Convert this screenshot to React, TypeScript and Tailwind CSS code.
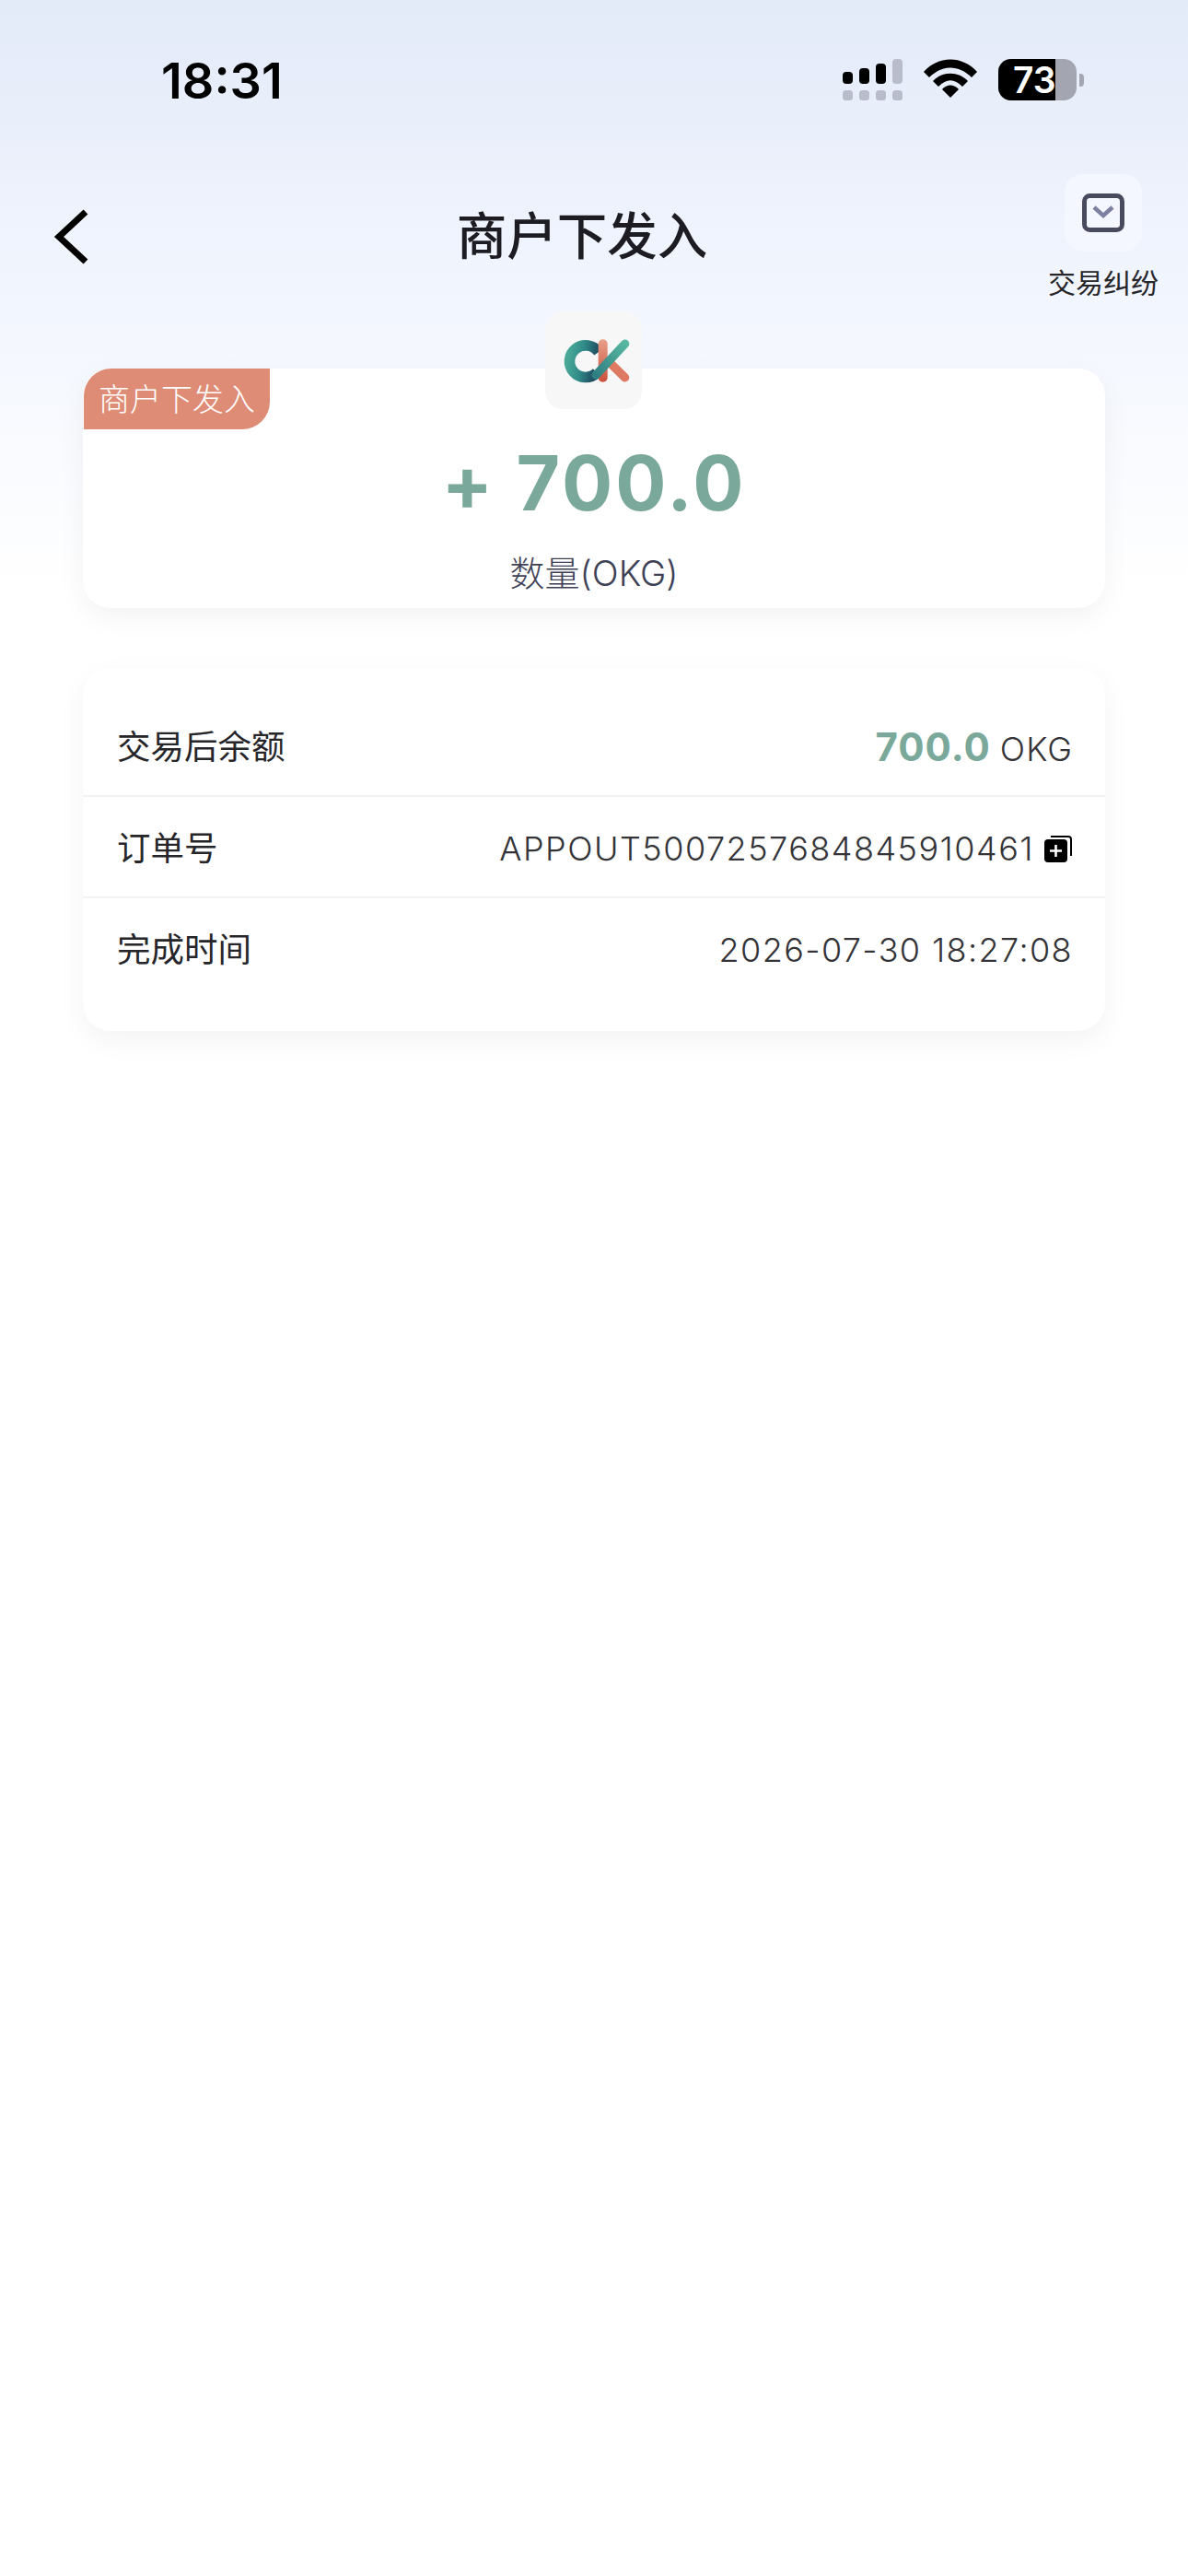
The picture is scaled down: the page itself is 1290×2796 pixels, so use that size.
import React from "react";

const cjk = "font-['Inter','Noto_Sans_CJK_SC',sans-serif]";

function Signal() {
  return (
    <svg width="65" height="45" viewBox="0 0 65 45">
      <rect x="0" y="14" width="11" height="13" rx="4" fill="#000" />
      <rect x="18" y="10" width="11" height="17" rx="4" fill="#000" />
      <rect x="36" y="5" width="11" height="22" rx="4" fill="#000" />
      <rect x="54" y="0" width="11" height="27" rx="4" fill="#b9bdcb" />
      <rect x="0" y="34" width="11" height="11" rx="3.5" fill="#b9bdcb" />
      <rect x="18" y="34" width="11" height="11" rx="3.5" fill="#b9bdcb" />
      <rect x="36" y="34" width="11" height="11" rx="3.5" fill="#b9bdcb" />
      <rect x="54" y="34" width="11" height="11" rx="3.5" fill="#b9bdcb" />
    </svg>
  );
}

function Wifi() {
  return (
    <svg width="58" height="42" viewBox="0 0 58 42">
      <path d="M0 14 C16 -4 42 -4 58 14 L52 20 C38 6 20 6 6 20 Z" fill="#000" />
      <path d="M10 24 C20 13 38 13 48 24 L42 30 C33 21 25 21 16 30 Z" fill="#000" />
      <path d="M20 33 C25 27 33 27 38 33 L29 42 Z" fill="#000" />
    </svg>
  );
}

function Battery() {
  return (
    <div className="flex items-center">
      <div className="relative flex h-[45px] w-[85px] overflow-hidden rounded-[14px] bg-[#a3a6b0]">
        <div className="h-full w-[62px] bg-black" />
        <span className="absolute left-[16px] top-0 text-[39px] font-semibold leading-[45px] text-white font-['Inter',sans-serif]">
          73
        </span>
      </div>
      <div className="ml-[3px] h-[14px] w-[5px] rounded-r-[4px] bg-[#a3a6b0]" />
    </div>
  );
}

function Logo() {
  return (
    <svg width="105" height="106" viewBox="97 55 315 317">
      <defs>
        <linearGradient id="ring" x1="0" y1="0" x2="1" y2="0.2">
          <stop offset="0" stopColor="#4aa898" />
          <stop offset="0.5" stopColor="#2f8a88" />
          <stop offset="1" stopColor="#1f4a60" />
        </linearGradient>
        <linearGradient id="red" x1="0" y1="0" x2="0" y2="1">
          <stop offset="0" stopColor="#e9a08a" />
          <stop offset="1" stopColor="#c9503c" />
        </linearGradient>
        <linearGradient id="diag" x1="1" y1="0" x2="0" y2="1">
          <stop offset="0" stopColor="#57b7a0" />
          <stop offset="1" stopColor="#2f7f82" />
        </linearGradient>
      </defs>
      <path d="M271 187 A52 52 0 1 0 265 254" fill="none" stroke="url(#ring)" strokeWidth="35" />
      <rect x="270" y="145" width="30" height="140" rx="15" fill="url(#red)" />
      <line x1="312" y1="226" x2="357" y2="270" stroke="#df7a62" strokeWidth="28" strokeLinecap="round" />
      <line x1="262" y1="262" x2="357" y2="160" stroke="url(#diag)" strokeWidth="28" strokeLinecap="round" />
    </svg>
  );
}

function Row({ label, children, className }: { label: string; children: React.ReactNode; className: string }) {
  return (
    <div className={`flex h-[110px] items-center justify-between pl-[37px] pr-[35px] ${className}`}>
      <span className="pt-[2px] text-[36.5px] font-normal text-[#26262a]">{label}</span>
      {children}
    </div>
  );
}

export default function App() {
  return (
    <div className={`min-h-[2796px] w-[1290px] bg-[linear-gradient(180deg,#e3eaf8_0px,#f1f5fe_300px,#f5f8fe_400px,#ffffff_640px)] ${cjk}`}>
      <div className="flex h-[189px] items-start justify-between pl-[175px] pr-[113px] pt-[64px]">
        <span className="text-[54px] font-semibold leading-[47px] text-black">18:31</span>
        <div className="flex items-start gap-[23px]">
          <Signal />
          <Wifi />
          <Battery />
        </div>
      </div>

      <div className="relative flex h-[136px] items-center justify-center pr-[26px]">
        <svg className="absolute left-[57px] top-[36px]" width="42" height="64" viewBox="0 0 42 64">
          <path d="M36 5 L7 32 L36 59" fill="none" stroke="#000" strokeWidth="7" />
        </svg>
        <span className="text-[54.5px] font-medium text-[#1c1c22]">商户下发入</span>
        <div className="absolute left-[1138px] top-0 flex w-[120px] flex-col items-center">
          <div className="flex h-[84px] w-[84px] items-center justify-center rounded-[20px] bg-[#f4f7ff]">
            <svg width="46" height="42" viewBox="0 0 46 42">
              <rect x="2.5" y="2.5" width="41" height="37" rx="6" fill="none" stroke="#484b5e" strokeWidth="5" />
              <path d="M13 15 L23 24 L33 15" fill="none" stroke="#7d80a0" strokeWidth="4.5" />
            </svg>
          </div>
          <span className="mt-[14px] whitespace-nowrap text-[30px] font-normal leading-[40px] text-[#26262a]">交易纠纷</span>
        </div>
      </div>

      <div className="relative ml-[90px] mt-[75px] h-[260px] w-[1110px] rounded-[30px] bg-white shadow-[0_10px_30px_rgba(0,0,0,0.05)]">
        <div className="absolute left-[1px] top-0 flex h-[66px] w-[202px] items-center justify-center rounded-bl-none rounded-br-[30px] rounded-tl-[30px] rounded-tr-none bg-[#de8c75] text-[34px] font-light text-white">
          商户下发入
        </div>
        <div className="absolute left-[502px] top-[-62px] flex h-[106px] w-[105px] items-center justify-center rounded-[20px] bg-[#f7f7f7]">
          <Logo />
        </div>
        <div className="flex flex-col items-center pt-[75px]">
          <div className="text-[82px] font-bold leading-[100px] tracking-[3px] text-[#7aa99b]">+ 700.0</div>
          <div className="mt-[22px] text-[38px] font-light leading-[50px] text-[#3e4156]">数量(OKG)</div>
        </div>
      </div>

      <div className="ml-[90px] mt-[65px] h-[394px] w-[1110px] rounded-[30px] bg-white pt-[30px] shadow-[0_10px_30px_rgba(0,0,0,0.05)]">
        <Row label="交易后余额" className="border-b-2 border-[#f2f2f3] pt-[3px]">
          <span className="flex items-baseline">
            <span className="text-[42px] font-bold tracking-[1px] text-[#7aa99b]">700.0</span>
            <span className="ml-[10px] text-[36px] font-light tracking-[1px] text-[#333338]">OKG</span>
          </span>
        </Row>
        <Row label="订单号" className="border-b-2 border-[#f2f2f3] pt-[3px]">
          <span className="flex items-center">
            <span className="text-[36px] font-light tracking-[1.5px] text-[#333338]">APPOUT5007257684845910461</span>
            <svg className="ml-[11px] mr-[1px]" width="30" height="30" viewBox="0 0 30 30">
              <path d="M7 2 H26 Q29 2 29 5 V23" fill="none" stroke="#000" strokeWidth="2" />
              <rect x="0" y="5" width="25" height="25" rx="4" fill="#000" />
              <path d="M12.5 11 V24 M6 17.5 H19" stroke="#fff" strokeWidth="2.6" />
            </svg>
          </span>
        </Row>
        <Row label="完成时间" className="pt-[1px]">
          <span className="text-[36px] font-light tracking-[1.4px] text-[#333338]">2026-07-30 18:27:08</span>
        </Row>
      </div>
    </div>
  );
}
